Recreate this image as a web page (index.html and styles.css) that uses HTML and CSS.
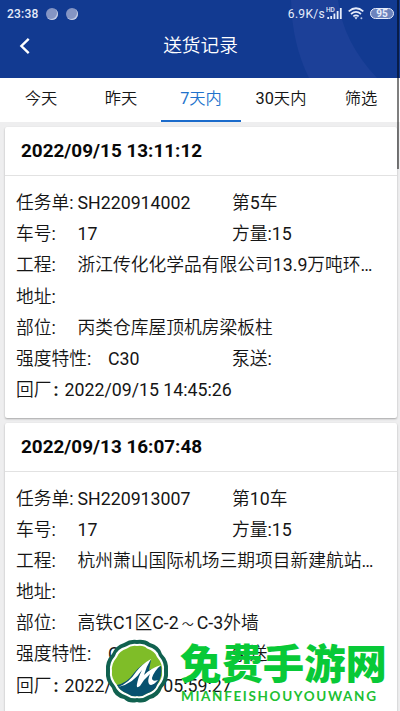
FILE: index.html
```html
<!DOCTYPE html>
<html lang="zh-CN">
<head>
    <meta charset="UTF-8">
    <meta name="viewport" content="width=device-width, initial-scale=1.0">
    <title>送货记录</title>
    <link rel="stylesheet" href="styles.css">
</head>
<body>
    <div class="header">
        <svg class="header-bg" viewBox="0 0 400 78" preserveAspectRatio="none">
            <path d="M291 0Q292 44 309 78H377Q343 42 338 0Z" fill="#1c4098"/>
        </svg>
        <div class="statusbar">
            <span class="clock">23:38</span>
            <span class="dot"></span>
            <span class="dot"></span>
            <span class="speed">6.9K/s</span>
            <svg class="signal" width="17" height="13" viewBox="0 0 17 13">
                <text x="0" y="5" class="hd">HD</text>
                <path d="M2.2 10v2M5.2 9v3M8.4 6.5V12M11.6 4V12M14.8 1V12" stroke="#e6ecfa" stroke-width="1.8"/>
            </svg>
            <svg class="wifi" width="16" height="13" viewBox="0 0 16 13" fill="none" stroke="#e6ecfa" stroke-width="1.7">
                <path d="M.7 4.3Q8-1.8 15.3 4.3M3 7Q8 2.8 13 7M5.3 9.4Q8 7.3 10.7 9.4"/>
                <path d="M6.4 10.3h3.200L8 12.4z" fill="#e6ecfa" stroke="none"/>
                <circle cx="13.4" cy="11.2" r="1" fill="#b4c2e4" stroke="none"/>
            </svg>
            <span class="battery">95</span>
        </div>
        <div class="navbar">
            <svg class="back" width="12" height="18" viewBox="0 0 12 18" fill="none" stroke="#fff" stroke-width="2.4">
                <path d="M9.7 1.8L2.4 9L9.7 16.2"/>
            </svg>
            <div class="nav-title">送货记录</div>
        </div>
    </div>

    <div class="tabs">
        <div class="tab">今天</div>
        <div class="tab">昨天</div>
        <div class="tab active">7天内</div>
        <div class="tab">30天内</div>
        <div class="tab">筛选</div>
    </div>

    <div class="list">
        <div class="card">
            <div class="card-title">2022/09/15 13:11:12</div>
            <div class="card-body">
                <div class="row"><span class="label">任务单:</span><span class="half">SH220914002</span><span>第5车</span></div>
                <div class="row"><span class="label">车号:</span><span class="half">17</span><span>方量:15</span></div>
                <div class="row"><span class="label">工程:</span><span class="text">浙江传化化学品有限公司13.9万吨环…</span></div>
                <div class="row"><span class="label">地址:</span></div>
                <div class="row"><span class="label">部位:</span><span class="text">丙类仓库屋顶机房梁板柱</span></div>
                <div class="row"><span class="label wide">强度特性:</span><span class="strength">C30</span><span>泵送:</span></div>
                <div class="row"><span class="label back-label">回厂<b class="colon">:</b></span><span>2022/09/15 14:45:26</span></div>
            </div>
        </div>

        <div class="card">
            <div class="card-title">2022/09/13 16:07:48</div>
            <div class="card-body">
                <div class="row"><span class="label">任务单:</span><span class="half">SH220913007</span><span>第10车</span></div>
                <div class="row"><span class="label">车号:</span><span class="half">17</span><span>方量:15</span></div>
                <div class="row"><span class="label">工程:</span><span class="text">杭州萧山国际机场三期项目新建航站…</span></div>
                <div class="row"><span class="label">地址:</span></div>
                <div class="row"><span class="label">部位:</span><span class="text">高铁C1区C-2<span class="tilde">～</span>C-3外墙</span></div>
                <div class="row"><span class="label wide">强度特性:</span><span class="strength">C30</span><span>泵送:</span></div>
                <div class="row"><span class="label back-label">回厂<b class="colon">:</b></span><span>2022/09/13 05:59:27</span></div>
            </div>
        </div>
    </div>

    <div class="scrollbar"></div>

    <div class="watermark">
        <svg class="wm-logo" width="68" height="66" viewBox="0 0 68 66">
            <path d="M34 2Q42 1 47 5Q57 8 59 16Q66 23 65 33Q66 43 59 50Q56 59 47 61Q41 66 34 64Q26 66 21 61Q11 59 9 50Q2 43 3 33Q2 23 9 16Q12 8 21 5Q27 1 34 2Z" fill="#10614f"/>
            <path d="M34 6Q41 5 45 8.500Q54 11 56 18Q62 25 61 33Q62 41 56 48Q53 55 45 57.500Q40 61 34 60Q28 61 23 57.500Q15 55 12 48Q6 41 7 33Q6 25 12 18Q14 11 23 8.500Q28 5 34 6Z" fill="#fff"/>
            <path d="M34 8Q41 7 44 10.500Q52 13 54 19Q60 26 59 33Q60 40 54 47Q52 53 44 55.500Q39 59 34 58Q29 59 24 55.500Q17 53 14 47Q8 40 9 33Q8 26 14 19Q16 13 24 10.500Q28 7 34 8Z" fill="#7fbd28"/>
            <path d="M14 47Q24 45 31 35Q38 26 48 22L46 32L58 28Q60 38 54 47Q52 53 44 55.500Q39 59 34 58Q29 59 24 55.500Q17 53 14 47Z" fill="#07516f"/>
            <path d="M15 49Q26 45 33 34Q39 26 48 21Q43 29 41 37Q48 30 58 27Q51 33 49 40Q49 44 55 42Q49 49 46 46Q44 43 47 36Q41 41 37 48Q33 51 34 46Q35 40 39 32Q30 46 15 49Z" fill="#fff"/>
        </svg>
        <div class="wm-text">
            <div class="wm-name">免费手游网</div>
            <div class="wm-url">MIANFEISHOUYOUWANG</div>
        </div>
    </div>
</body>
</html>
```
FILE: styles.css
```css
* {
    margin: 0;
    padding: 0;
    box-sizing: border-box;
}

body {
    position: relative;
    width: 400px;
    height: 711px;
    overflow: hidden;
    background-color: #eeeeef;
    color: #151515;
    font-family: Roboto, 'Noto Sans CJK SC DemiLight', 'Noto Sans CJK SC', sans-serif;
}

.header {
    position: relative;
    height: 78px;
    background-color: #123a91;
    color: #fff;
}

.header-bg {
    position: absolute;
    top: 0;
    left: 0;
    width: 100%;
    height: 100%;
}

.statusbar {
    position: relative;
    height: 27px;
    display: flex;
    align-items: center;
    padding: 0 6px 0 7px;
    font-size: 12px;
    color: #e6ecfa;
}

.clock {
    width: 32px;
    margin-right: 7px;
    font-weight: 500;
    letter-spacing: 0.2px;
}

.dot {
    width: 12px;
    height: 12px;
    margin-right: 8px;
    border-radius: 50%;
    background-color: #8595c4;
    box-shadow: inset -1px -1px 0 #c3cce5;
}

.speed {
    margin-left: auto;
    letter-spacing: 0.3px;
}

.signal {
    margin: 0 5px 0 1px;
}

.hd {
    font-size: 6.5px;
    font-weight: 500;
    fill: #e6ecfa;
}

.battery {
    width: 24px;
    height: 11px;
    margin-left: 6px;
    border: 1px solid #e6ecfa;
    border-radius: 6px;
    background-color: #6c83bd;
    font-size: 10px;
    font-weight: 700;
    line-height: 9px;
    text-align: center;
}

.navbar {
    position: relative;
    height: 38px;
    display: flex;
    align-items: center;
    padding-left: 19px;
}

.nav-title {
    flex: 1;
    padding-right: 30px;
    font-size: 18.7px;
    line-height: 38px;
    text-align: center;
}

.tabs {
    height: 44px;
    display: grid;
    grid-template-columns: repeat(5, 80px);
    padding-left: 1px;
    background-color: #fff;
    overflow: hidden;
}

.tab {
    height: 44px;
    font-size: 16.3px;
    line-height: 41px;
    text-align: center;
    border-bottom: 2px solid transparent;
}

.tab.active {
    color: #2272cc;
    border-bottom-color: #1b6bcb;
}

.list {
    display: flex;
    flex-direction: column;
    gap: 5px;
    padding: 5px 3px 0 5px;
}

.card {
    flex: none;
    height: 290.5px;
    background-color: #fff;
    border-radius: 2px;
    box-shadow: 0 1px 2px rgba(0, 0, 0, 0.3);
}

.card-title {
    height: 49px;
    padding-left: 16px;
    border-bottom: 1px solid #e2e2e2;
    font-size: 18.9px;
    font-weight: 700;
    line-height: 48px;
    color: #080808;
}

.card-body {
    padding: 12px 20px 0 11px;
    font-size: 17.75px;
}

.row {
    height: 31.2px;
    display: flex;
    line-height: 31.2px;
    white-space: nowrap;
}

.label {
    flex: none;
    width: 61.5px;
}

.half {
    width: 154.5px;
}

.label.wide {
    width: 92px;
}

.strength {
    width: 124px;
}

.label.back-label {
    width: 48.5px;
}

.colon {
    margin-left: 2px;
}

.tilde {
    display: inline-block;
    width: 18px;
    font-size: 12px;
    text-align: center;
}

.scrollbar {
    position: absolute;
    top: 0;
    right: 1px;
    width: 2px;
    height: 169px;
    background-color: rgba(0, 0, 0, 0.5);
}

.watermark {
    position: absolute;
    left: 103px;
    top: 638px;
    display: flex;
}

.wm-text {
    padding-left: 9px;
}

.wm-name {
    height: 51px;
    font-family: 'Noto Sans CJK SC', sans-serif;
    font-size: 41.4px;
    font-weight: 900;
    line-height: 47px;
    color: #08c937;
    white-space: nowrap;
}

.wm-url {
    padding-left: 1px;
    font-family: Lato, sans-serif;
    font-size: 13.5px;
    font-weight: 700;
    line-height: 14px;
    letter-spacing: 1.65px;
    color: #20bf32;
}
```
